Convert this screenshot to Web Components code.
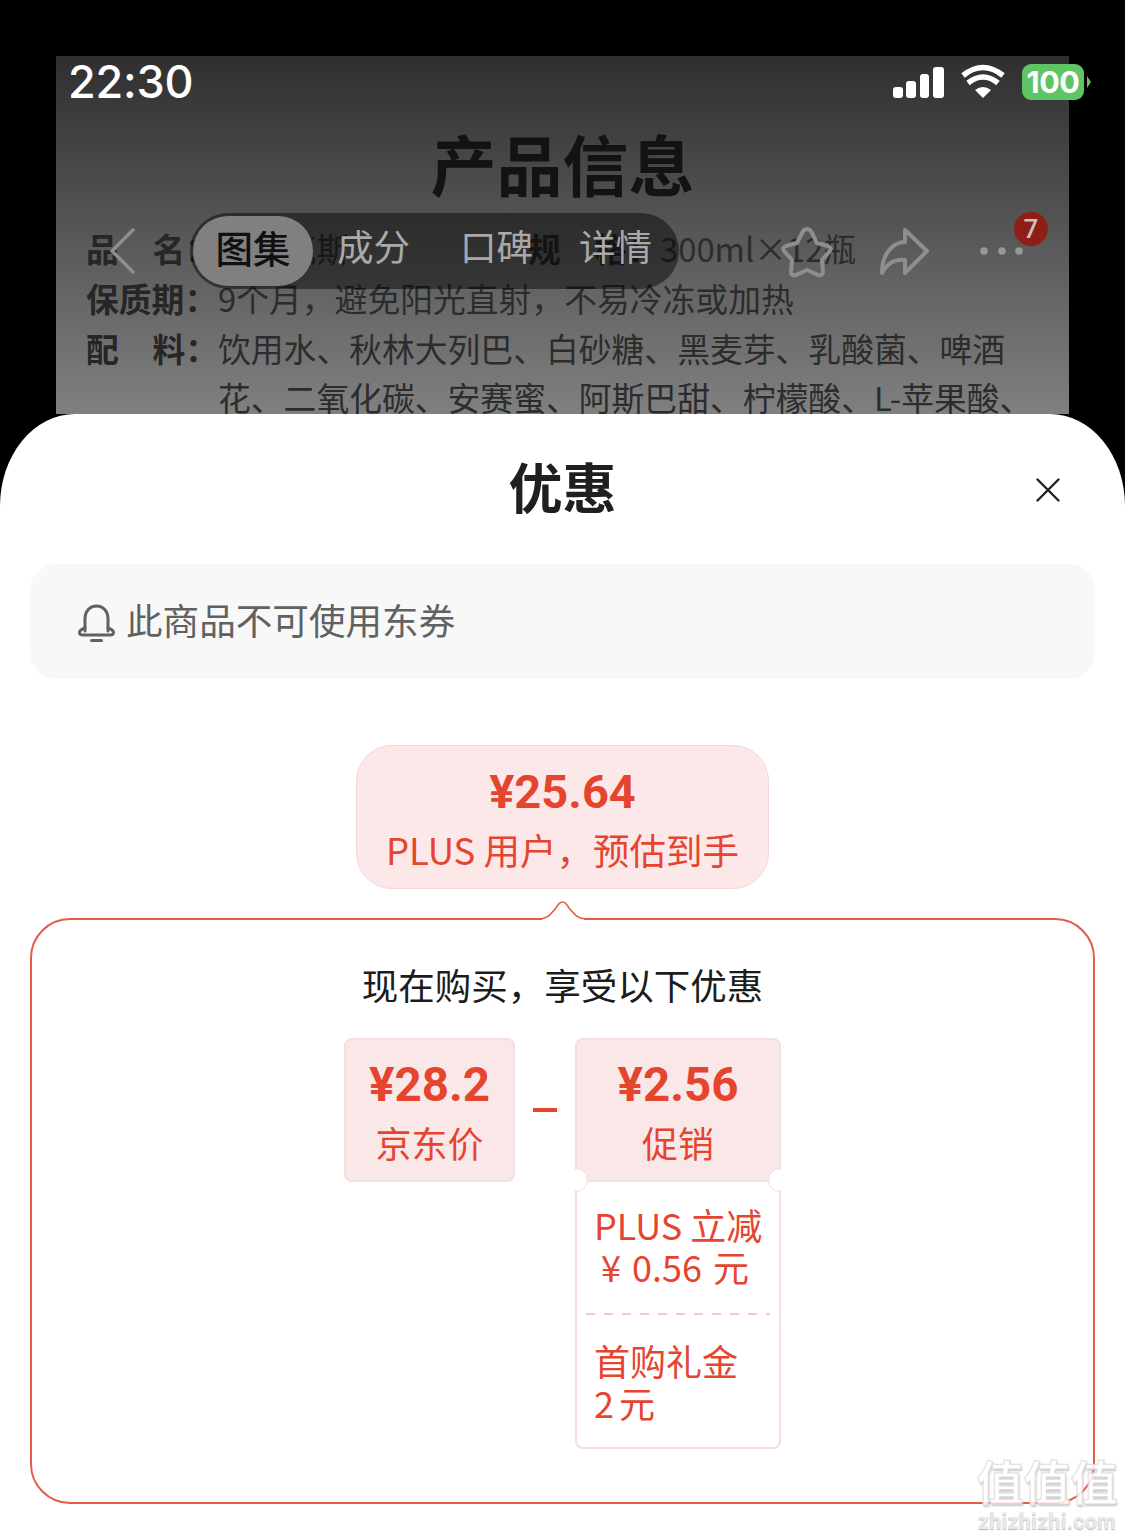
<!DOCTYPE html>
<html lang="zh-CN">
<head>
<meta charset="utf-8">
<title>优惠</title>
<style>
  html, body { margin: 0; padding: 0; background: #000; }
  body { font-family: "Noto Sans CJK SC", "Noto Sans", sans-serif; }
</style>
</head>
<body>
<app-screen>
  <product-backdrop slot="backdrop"></product-backdrop>
  <status-bar slot="overlay"></status-bar>
  <detail-nav slot="overlay"></detail-nav>
  <offer-sheet slot="sheet">
    <sheet-notice>此商品不可使用东券</sheet-notice>
    <price-bubble price="¥25.64">PLUS 用户，预估到手</price-bubble>
    <offer-panel heading="现在购买，享受以下优惠">
      <price-card price="¥28.2" label="京东价"></price-card>
      <promo-card slot="after" price="¥2.56" label="促销">
        <promo-item>PLUS 立减<br><span style="display:block;text-align:center;word-spacing:3px;margin-left:-6px">¥ 0.56 元</span></promo-item>
        <promo-item>首购礼金<br>2<span style="margin-left:5px">元</span></promo-item>
      </promo-card>
    </offer-panel>
  </offer-sheet>
  <site-watermark slot="overlay"></site-watermark>
</app-screen>

<script>
const CJK = '"Noto Sans CJK SC", "Noto Sans", sans-serif';
const NUM = 'Roboto, "Noto Sans CJK SC", sans-serif';

// Small helper, every element here is the same shape: static markup in an open shadow root
function define(name, css, html) {
  customElements.define(name, class extends HTMLElement {
    constructor() {
      super();
      this.attachShadow({ mode: 'open' });
    }
    connectedCallback() {
      const attrs = {};
      for (const a of this.attributes) attrs[a.name] = a.value;
      const body = typeof html === 'function' ? html(attrs) : html;
      this.shadowRoot.innerHTML = `<style>${css}</style>${body}`;
    }
  });
}

define('app-screen', `
  :host { display: block; position: relative; width: 1125px; height: 1538px; overflow: hidden; background: #000; }
  .top { padding: 56px 56px 0; }
`, `
  <div class="top"><slot name="backdrop"></slot></div>
  <slot name="sheet"></slot>
  <slot name="overlay"></slot>
`);

define('product-backdrop', `
  :host {
    display: block; height: 358px; overflow: hidden; box-sizing: border-box;
    padding: 0 30px; font-family: ${CJK}; color: #2c2c2c;
    background: linear-gradient(#2f2f2f, #808080);
  }
  h1 { margin: 0; padding-top: 65px; height: 102px; line-height: 82px; font-size: 66px; font-weight: 700; color: #131313; text-align: center; }
  .spec { font-size: 32.8px; line-height: 49.8px; }
  .row { display: flex; white-space: nowrap; }
  .lab { width: 132px; flex: none; font-weight: 700; color: #262626; display: flex; justify-content: space-between; }
  .name { width: 310px; flex: none; }
`, `
  <h1>产品信息</h1>
  <div class="spec">
    <div class="row"><div class="lab"><span>品</span><span>名：</span></div><span class="name">黑格克斯</span><div class="lab"><span>规</span><span>格：</span></div><span>300ml×12瓶</span></div>
    <div class="row"><div class="lab">保质期：</div><span>9个月，避免阳光直射，不易冷冻或加热</span></div>
    <div class="row"><div class="lab"><span>配</span><span>料：</span></div><span>饮用水、秋林大列巴、白砂糖、黑麦芽、乳酸菌、啤酒</span></div>
    <div class="row"><div class="lab"></div><span>花、二氧化碳、安赛蜜、阿斯巴甜、柠檬酸、L-苹果酸、</span></div>
  </div>
`);

define('status-bar', `
  :host { position: absolute; left: 0; top: 56px; width: 1125px; height: 52px; font-family: Inter, Roboto, sans-serif; color: #fff; }
  .time { position: absolute; left: 68px; top: 0; font-size: 45px; line-height: 52px; font-weight: 500; letter-spacing: -.2px; }
  svg { position: absolute; left: 885px; top: 0; }
  .batt { position: absolute; left: 1022px; top: 8px; width: 62px; height: 36px; border-radius: 9px; background: #5ec464; font: 700 30.5px/36px Inter, Roboto, sans-serif; letter-spacing: -.5px; text-align: center; }
  .nub { position: absolute; left: 1087px; top: 20px; width: 0; height: 0; border-left: 4px solid #5ec464; border-top: 6px solid transparent; border-bottom: 6px solid transparent; }
`, `
  <span class="time">22:30</span>
  <svg width="125" height="52" viewBox="0 0 125 52" fill="#fff">
    <rect x="8" y="31" width="10" height="11" rx="3"/>
    <rect x="21" y="25" width="10" height="17" rx="3"/>
    <rect x="35" y="18" width="9" height="24" rx="3"/>
    <rect x="48" y="11" width="11" height="31" rx="3"/>
    <path d="M98 42 l-8 -8 q8 -6 16 0 z"/>
    <path d="M83 27 q15 -12 30 0" fill="none" stroke="#fff" stroke-width="5.5"/>
    <path d="M78 19.500 q20 -16 40 0" fill="none" stroke="#fff" stroke-width="5.5"/>
  </svg>
  <div class="batt">100</div>
  <div class="nub"></div>
`);

define('detail-nav', `
  :host { position: absolute; left: 0; top: 205px; width: 1125px; height: 90px; font-family: ${CJK}; }
  .pill { position: absolute; left: 190px; top: 8px; width: 489px; height: 76px; border-radius: 38px; background: rgba(0,0,0,.46); }
  .on { position: absolute; left: 2px; top: 2px; width: 122px; height: 72px; box-sizing: border-box; border: 1.5px solid #2c2c2c; border-radius: 36px; background: #808080; color: #101010; font-size: 37.5px; font-weight: 500; line-height: 62px; text-align: center; }
  .tab { position: absolute; top: 0; font-size: 36.5px; line-height: 66px; color: #a9a9a9; white-space: nowrap; }
  svg { position: absolute; left: 0; top: 0; }
  .badge { position: absolute; left: 1014px; top: 7px; width: 34px; height: 34px; border-radius: 50%; background: #8f1e16; color: #c9c2c0; font: 500 26px/34px Roboto, sans-serif; text-align: center; }
`, `
  <div class="pill">
    <div class="on">图集</div>
    <span class="tab" style="left:147px">成分</span>
    <span class="tab" style="left:270px">口碑</span>
    <span class="tab" style="left:389px">详情</span>
  </div>
  <svg width="1125" height="90" viewBox="0 0 1125 90" fill="none" stroke="#8e8e8e" stroke-linecap="round" stroke-linejoin="round">
    <path d="M133 25 L112 46 L133 67" stroke-width="3.500"/>
    <path d="M807 24 q3 0 5 4 l5 10 11 3 q5 2 1 6 l-7 8 1 12 q0 4 -5 3 l-11 -5 -11 5 q-5 1 -5 -3 l1 -12 -7 -8 q-4 -4 1 -6 l11 -3 5 -10 q2 -4 5 -4 z" stroke-width="4"/>
    <path d="M905 25 L927 46 L905 68 V55 C897 54 888 57 882 68 C882 50 892 37 905 37 Z" stroke-width="4"/>
    <g fill="#979797" stroke="none"><circle cx="984" cy="46" r="3.800"/><circle cx="1002" cy="46" r="3.800"/><circle cx="1019" cy="46" r="3.800"/></g>
  </svg>
  <div class="badge">7</div>
`);

define('offer-sheet', `
  :host { display: block; box-sizing: border-box; height: 1124px; padding: 0 30px; background: #fff; border-radius: 75px 75px 0 0 / 92px 92px 0 0; position: relative; font-family: ${CJK}; }
  header { height: 150px; line-height: 144px; text-align: center; font-size: 54px; font-weight: 700; color: #1f1f1f; }
  svg { position: absolute; left: 1036px; top: 64px; }
`, `
  <header>优惠</header>
  <svg width="24" height="24" viewBox="0 0 24 24" fill="none" stroke="#222" stroke-width="2.400" stroke-linecap="round"><path d="M1.500 1.500 L22.500 22.500 M22.500 1.500 L1.500 22.500"/></svg>
  <slot></slot>
`);

define('sheet-notice', `
  :host { display: flex; align-items: center; gap: 11px; height: 115px; box-sizing: border-box; padding: 0 0 4px 48px; margin-bottom: 66px; background: #f8f8f8; border-radius: 26px; color: #616161; font-size: 36.6px; }
  svg { flex: none; margin-top: 6px; }
`, `
  <svg width="37" height="38" viewBox="0 0 37 38" fill="none" stroke="#616161" stroke-width="3" stroke-linejoin="round" stroke-linecap="round">
    <path d="M7 27 V15 C7 7 12 2 18.500 2 S30 7 30 15 V27"/>
    <path d="M7 24 C4 25 1.500 26 1.500 28.500 C1.500 30 3 31 5 31 H32 C34 31 35.500 30 35.500 28.500 C35.500 26 33 25 30 24"/>
    <path d="M13.500 36.500 H23.500"/>
  </svg>
  <slot></slot>
`);

define('price-bubble', `
  :host { display: block; box-sizing: border-box; width: 413px; height: 144px; margin: 0 0 29px 326px; text-align: center; background: #fce8e9; border: 1px solid #f6d6d6; border-radius: 36px; color: #e5452f; }
  .p { font: 700 47px/60px ${NUM}; padding-top: 16px; }
  .l { font-size: 36.5px; line-height: 56px; white-space: nowrap; }
`, a => `<div class="p">${a.price}</div><div class="l"><slot></slot></div>`);

define('offer-panel', `
  :host { display: block; position: relative; box-sizing: border-box; height: 586px; border: 2px solid #e65a48; border-radius: 40px; }
  .notch { position: absolute; left: 496px; top: -20px; }
  h2 { margin: 0; padding-top: 40px; height: 78px; line-height: 50px; font-size: 36.5px; font-weight: 400; color: #1c1c1c; text-align: center; }
  .row { display: flex; justify-content: center; align-items: flex-start; }
  .gap { flex: none; width: 60px; height: 144px; display: flex; align-items: center; justify-content: center; }
  .gap i { display: block; width: 24px; height: 4px; background: #e5452f; }
`, a => `
  <svg class="notch" width="70" height="24" viewBox="0 0 70 24">
    <rect x="14" y="16" width="42" height="6" fill="#fff"/>
    <path d="M11 19 C19 19 22 15 28 8 Q34.500 -4 41 8 C47 15 50 19 58 19" fill="#fff" stroke="#e65a48" stroke-width="1.600"/>
  </svg>
  <h2>${a.heading}</h2>
  <div class="row"><slot></slot><div class="gap"><i></i></div><slot name="after"></slot></div>
`);

define('price-card', `
  :host { display: block; flex: none; box-sizing: border-box; width: 171px; height: 144px; text-align: center; background: #fae8e9; border: 2px solid #f5dede; border-radius: 8px; color: #e5452f; }
  .p { font: 700 47.5px/60px ${NUM}; padding-top: 15px; }
  .l { font-size: 36px; line-height: 54px; }
`, a => `<div class="p">${a.price}</div><div class="l">${a.label}</div>`);

define('promo-card', `
  :host { display: block; flex: none; position: relative; box-sizing: border-box; width: 206px; height: 411px; background: #fff; border: 2px solid #f5dede; border-radius: 8px; color: #e5452f; }
  .head { height: 142px; text-align: center; background: #fae8e9; border-radius: 6px 6px 0 0; box-sizing: border-box; border-bottom: 2px solid #f5dede; }
  .p { font: 700 47.5px/60px ${NUM}; padding-top: 15px; }
  .l { font-size: 36px; line-height: 54px; }
  .cut { position: absolute; top: 128px; width: 24px; height: 24px; border-radius: 50%; background: #fff; border: 1.5px solid #f3d8d8; box-sizing: border-box; }
  .cut.a { left: -13px; clip-path: inset(0 0 0 12px); }
  .cut.b { right: -13px; clip-path: inset(0 12px 0 0); }
  .mask { position: absolute; top: 130px; width: 2px; height: 20px; background: #fff; }
`, a => `
  <div class="head"><div class="p">${a.price}</div><div class="l">${a.label}</div></div>
  <div class="mask" style="left:-2px"></div><div class="mask" style="right:-2px"></div>
  <div class="cut a"></div><div class="cut b"></div>
  <slot></slot>
`);

define('promo-item', `
  :host { display: block; margin: 0 9px; padding: 21px 8px 0; height: 134px; box-sizing: border-box; font-size: 36px; line-height: 42px; white-space: nowrap; }
  :host(:first-of-type) { height: 133px; background: linear-gradient(90deg, #f3c9c9 50%, transparent 0) left bottom / 18px 2px repeat-x; }
  :host(:last-of-type) { padding-top: 24px; }
`, `<slot></slot>`);

define('site-watermark', `
  :host { position: absolute; left: 974px; top: 1452px; width: 146px; text-align: center; font-family: ${CJK}; opacity: .85; }
  .m { font-size: 47px; line-height: 56px; font-weight: 700; color: #fff; -webkit-text-stroke: 1px #d8d8d8; text-shadow: 1px 2px 2px #bbb; white-space: nowrap; }
  .u { font: 700 21.5px/24px Roboto, sans-serif; color: #e4e4e4; text-shadow: 0 1px 1px #aaa; letter-spacing: .3px; margin-top: 2px; }
`, `<div class="m">值值值</div><div class="u">zhizhizhi.com</div>`);
</script>
</body>
</html>
